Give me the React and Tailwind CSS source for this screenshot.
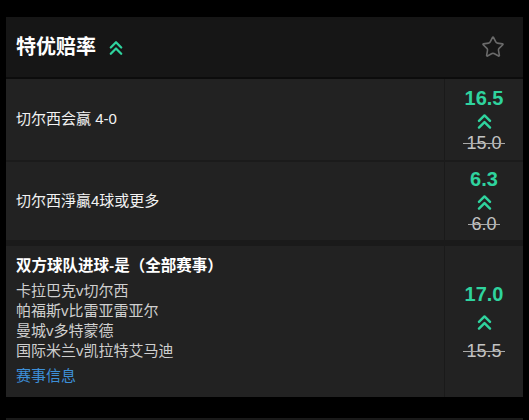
import { Star } from 'lucide-react'

const font = { fontFamily: '"Liberation Sans", "Noto Sans CJK SC", sans-serif' }

function Chevrons({ className = '', w = 14, h = 16 }) {
  return (
    <svg width={w} height={h} viewBox="0 0 14 16" fill="none" className={className}>
      <polyline points="1.8,7.5 7,2.3 12.2,7.5" stroke="#2fd39e" strokeWidth="2.3" strokeLinecap="round" strokeLinejoin="round" />
      <polyline points="1.8,13.7 7,8.5 12.2,13.7" stroke="#2fd39e" strokeWidth="2.3" strokeLinecap="round" strokeLinejoin="round" />
    </svg>
  )
}

function Odds({ price, old, tall }) {
  return (
    <div className="w-[79px] shrink-0 border-l border-[#1a1a1a] flex flex-col items-center justify-center">
      <div className="text-[20px] leading-[22px] font-bold text-[#2fd39e]">{price}</div>
      <Chevrons w={15} h={17} className={tall ? 'mt-[9px]' : 'mt-[4px]'} />
      <div className={`relative text-[18px] leading-[20px] text-[#c4c4c4] ${tall ? 'mt-[10px]' : 'mt-[3px]'}`}>
        {old}
        <span className="absolute left-[-3px] right-[-3px] top-[10px] h-px bg-[#a8a8a8]" />
      </div>
    </div>
  )
}

function Row({ label, price, old, className = '' }) {
  return (
    <div className={`flex bg-[#222222] ${className}`}>
      <div className="flex-1 flex items-center pl-[10px] text-[15px] text-[#f2f2f2]">{label}</div>
      <Odds price={price} old={old} />
    </div>
  )
}

export default function App() {
  const matches = ['卡拉巴克v切尔西', '帕福斯v比雷亚雷亚尔', '曼城v多特蒙德', '国际米兰v凯拉特艾马迪']

  return (
    <div className="h-[420px] bg-black pt-[17px] pl-[6px] pr-[6px] overflow-hidden" style={font}>
      <div className="w-[517px]">
        {/* Header */}
        <div className="h-[62px] bg-[#161616] flex items-center pl-[10px] pr-[18px] border-b-2 border-[#0c0c0c]">
          <span className="text-[20px] font-bold text-white">特优赔率</span>
          <Chevrons className="ml-[13px] mt-[2px]" />
          <div className="flex-1" />
          <Star size={24} strokeWidth={1.6} color="#6a6a6a" />
        </div>

        <Row label="切尔西会赢 4-0" price="16.5" old="15.0" className="h-[83px] border-b-2 border-[#1b1b1b]" />
        <Row label="切尔西淨贏4球或更多" price="6.3" old="6.0" className="h-[84px] border-b-[6px] border-[#1a1a1a]" />

        {/* Combo */}
        <div className="flex bg-[#222222] h-[151px]">
          <div className="flex-1 pl-[10px] pt-[10px]">
            <div className="text-[15.5px] leading-[20px] font-bold text-white">双方球队进球-是（全部赛事）</div>
            <div className="mt-[5px] text-[15px] leading-[20px] text-[#cfcfcf]">
              {matches.map((m) => (
                <div key={m}>{m}</div>
              ))}
            </div>
            <div className="mt-[5px] text-[15px] leading-[20px] text-[#3d8fd8]">赛事信息</div>
          </div>
          <Odds price="17.0" old="15.5" tall />
        </div>

        <div className="mt-[21px] h-[4px] bg-[#1a1a1a]" />
      </div>
    </div>
  )
}
